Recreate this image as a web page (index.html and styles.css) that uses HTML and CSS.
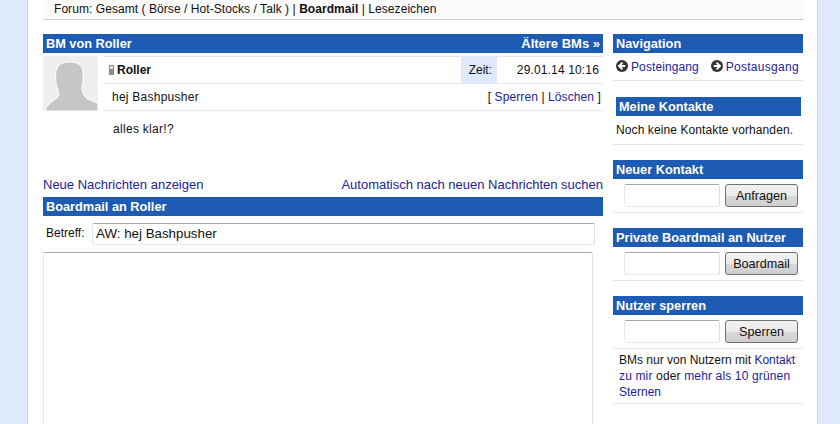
FILE: index.html
```html
<!DOCTYPE html>
<html lang="de">
<head>
<meta charset="utf-8">
<title>Boardmail</title>
<link rel="stylesheet" href="styles.css">
</head>
<body>
<div class="page">
  <div class="topnav">Forum: <a class="plain">Gesamt</a> ( <a class="plain">Börse</a> / <a class="plain">Hot-Stocks</a> / <a class="plain">Talk</a> ) | <b>Boardmail</b> | <a class="plain">Lesezeichen</a></div>
  <div class="columns">
    <main class="main">
      <div class="bar"><span>BM von Roller</span><span class="older">Ältere BMs »</span></div>
      <div class="message">
        <svg class="avatar" viewBox="0 0 55 55" role="img" aria-label="Avatar">
          <rect width="55" height="55" fill="#efefef"/>
          <path d="M2 55C3 49 8 46 12 43C16 41 16 37 15 34C12 28 12 22 13 15C14 8 20 6 27 6C35 6 40 10 40 17C41 24 39 28 39 32C39 37 41 40 45 43L55 47V55Z" fill="#c6c6c6" stroke="#fbfbfb" stroke-width="1.200"/>
        </svg>
        <div class="details">
          <div class="row row-head">
            <div class="author"><span class="status"></span><b>Roller</b></div>
            <div class="time-label">Zeit:</div>
            <div class="time">29.01.14 10:16</div>
          </div>
          <div class="row row-subject">
            <div class="subject">hej Bashpusher</div>
            <div class="actions">[ <a>Sperren</a> | <a>Löschen</a> ]</div>
          </div>
          <div class="body-text">alles klar!?</div>
        </div>
      </div>
      <div class="links"><a>Neue Nachrichten anzeigen</a><a>Automatisch nach neuen Nachrichten suchen</a></div>
      <div class="bar"><span>Boardmail an Roller</span></div>
      <div class="subject-line">
        <label class="subject-label" for="betreff">Betreff:</label>
        <input class="field subject-field" id="betreff" type="text" value="AW: hej Bashpusher">
      </div>
      <textarea class="field editor" aria-label="Nachricht"></textarea>
    </main>
    <aside class="side">
      <section class="box box-nav">
        <div class="bar">Navigation</div>
        <div class="nav-row">
          <a class="nav-link"><svg class="arrow" viewBox="0 0 12 12"><circle cx="6" cy="6" r="6" fill="#333"/><path d="M6.500 2.600 3 6l3.500 3.400M3.400 6h5.800" fill="none" stroke="#fff" stroke-width="2"/></svg>Posteingang</a>
          <a class="nav-link nav-link-wide"><svg class="arrow" viewBox="0 0 12 12"><circle cx="6" cy="6" r="6" fill="#333"/><path d="M5.500 2.600 9 6 5.500 9.400M8.600 6H2.800" fill="none" stroke="#fff" stroke-width="2"/></svg>Postausgang</a>
        </div>
      </section>
      <section class="box">
        <div class="bar bar-inset">Meine Kontakte</div>
        <div class="note">Noch keine Kontakte vorhanden.</div>
      </section>
      <section class="box">
        <div class="bar">Neuer Kontakt</div>
        <div class="form-row"><input class="field small" type="text" aria-label="Kontakt"><button class="btn">Anfragen</button></div>
      </section>
      <section class="box">
        <div class="bar">Private Boardmail an Nutzer</div>
        <div class="form-row"><input class="field small" type="text" aria-label="Nutzer"><button class="btn">Boardmail</button></div>
      </section>
      <section class="box">
        <div class="bar">Nutzer sperren</div>
        <div class="form-row form-row-ruled"><input class="field small" type="text" aria-label="Sperren"><button class="btn">Sperren</button></div>
        <div class="info">BMs nur von Nutzern mit <a>Kontakt</a><br><span class="info-wide"><a>zu mir</a> oder <a>mehr als 10 grünen</a></span><br><a>Sternen</a></div>
      </section>
    </aside>
  </div>
</div>
</body>
</html>
```
FILE: styles.css
```css
* { box-sizing: border-box; }
html, body { height: 100%; }
body {
  margin: 0;
  background: #dee9fb;
  font: 12px/15px "Liberation Sans", Arial, sans-serif;
  color: #111;
  overflow: hidden;
}
a { color: #22229c; }
a.plain { color: #111; }
.page {
  width: 791px;
  height: 424px;
  margin-left: 27px;
  padding: 0 14px 0 15px;
  background: #fff;
  border-left: 1px solid #c9d8f0;
  border-right: 1px solid #c9d8f0;
  overflow: hidden;
}
.topnav {
  height: 20px;
  padding: 2px 0 0 11px;
  background: #fbfbfb;
  border-bottom: 1px solid #ccc;
  margin-bottom: 14px;
  letter-spacing: 0.06px;
}
.columns { display: flex; gap: 10px; }
.main { width: 560px; flex: none; }
.side { width: 190px; flex: none; }
.bar {
  display: flex;
  justify-content: space-between;
  height: 19px;
  padding: 0 3px;
  background: #1e5cb3;
  color: #fff;
  font-weight: bold;
  line-height: 19px;
  font-size: 12.75px;
}
.older { font-size: 13px; }
.message { display: flex; gap: 5px; margin-top: 3px; height: 123px; }
.avatar { width: 55px; height: 55px; flex: none; display: block; }
.details { flex: 1; min-width: 0; }
.row { display: flex; height: 27px; border-top: 1px solid #e8e8e8; align-items: center; }
.row-subject { border-bottom: 1px solid #e8e8e8; height: 28px; }
.author { flex: 1; display: flex; align-items: center; padding-left: 6px; }
.author b { margin-left: 3px; }
.status {
  width: 5px;
  height: 10px;
  background: #e4e4e4;
  border: 1px solid #8c8c8c;
  border-bottom-width: 6px;
}
.time-label { width: 36px; height: 26px; background: #dee9fb; line-height: 26px; text-align: right; padding-right: 5px; }
.time { width: 106px; text-align: right; padding-right: 4px; letter-spacing: 0.15px; }
.subject { flex: 1; padding-left: 9px; letter-spacing: 0.25px; }
.actions { padding-right: 2px; letter-spacing: 0.1px; }
.body-text { padding: 11px 0 0 10px; letter-spacing: 0.3px; }
.links { display: flex; justify-content: space-between; height: 18px; line-height: 12px; font-size: 13px; }
.field { border: 1px solid #ccc; border-top-color: #aaa; border-bottom-color: #e3e9ef; border-left-color: #e3e9ef; border-right-color: #dbdfe6; border-radius: 2px; background: #fff; }
.subject-line { display: flex; align-items: center; margin-top: 7px; height: 21px; }
.subject-label { width: 49px; padding-left: 3px; flex: none; }
.subject-field { width: 503px; height: 22px; padding: 0 2px 0 3px; font: 13.33px "Liberation Sans", Arial, sans-serif; color: #111; }
.editor { display: block; width: 550px; height: 260px; margin-top: 8px; resize: none; }
.box { margin-bottom: 15px; border-bottom: 1px solid #e8e8e8; }
.box-nav { margin-bottom: 16px; }
.nav-row { display: flex; justify-content: space-between; height: 27px; align-items: center; padding: 1px 4px 0 3px; }
.nav-link { display: flex; align-items: center; gap: 3px; letter-spacing: 0.1px; }
.nav-link-wide { letter-spacing: 0.3px; }
.arrow { width: 12px; height: 12px; margin-top: -3px; }
.bar-inset { margin-left: 3px; margin-right: 2px; padding-left: 3px; }
.note { height: 28px; line-height: 29px; padding-left: 3px; letter-spacing: 0.1px; }
.form-row { display: flex; gap: 5px; height: 33px; align-items: flex-start; padding: 5px 0 0 11px; }
.small { width: 96px; height: 23px; }
.btn {
  width: 73px;
  height: 23px;
  padding: 0;
  border: 1px solid #707070;
  border-radius: 3px;
  background: linear-gradient(#f2f2f2 0, #ebebeb 50%, #d8d8d8 51%, #cfcfcf 100%);
  font: 12.6px "Liberation Sans", Arial, sans-serif;
  color: #111;
}
.form-row-ruled { height: 34px; border-bottom: 1px solid #e8e8e8; }
.info { padding: 3px 0 0 6px; line-height: 16px; height: 54px; }
.info-wide { letter-spacing: 0.15px; }
```
